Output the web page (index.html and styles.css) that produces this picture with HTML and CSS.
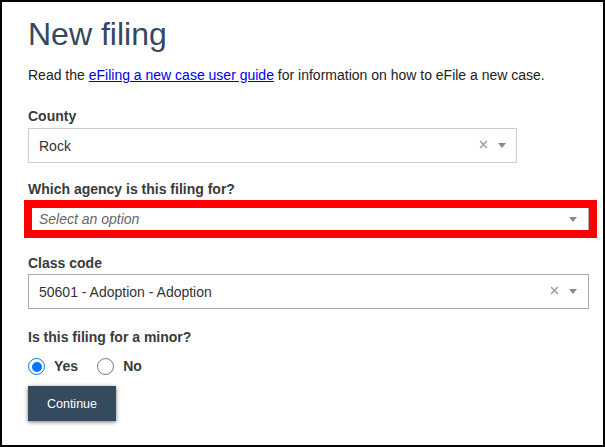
FILE: index.html
```html
<!DOCTYPE html>
<html lang="en">
<head>
<meta charset="utf-8">
<title>New filing</title>
<link rel="stylesheet" href="styles.css">
</head>
<body>
<main class="frame">
  <h1 class="title">New filing</h1>
  <p class="intro">Read the <a href="#" class="link">eFiling a new case user guide</a> for information on how to eFile a new case.</p>

  <div class="field field-first">
    <div class="label">County</div>
    <div class="select select-county">
      <span class="select-text">Rock</span>
      <svg class="clear" width="9" height="9" viewBox="0 0 9 9"><path d="M1 1L8 8M8 1L1 8" stroke="#999" stroke-width="1.4" fill="none"/></svg>
      <span class="arrow"></span>
    </div>
  </div>

  <div class="field">
    <div class="label">Which agency is this filing for?</div>
    <div class="highlight">
      <div class="select-inner">
        <span class="select-text placeholder">Select an option</span>
        <span class="arrow"></span>
      </div>
    </div>
  </div>

  <div class="field field-class">
    <div class="label">Class code</div>
    <div class="select select-class">
      <span class="select-text">50601 - Adoption - Adoption</span>
      <svg class="clear" width="9" height="9" viewBox="0 0 9 9"><path d="M1 1L8 8M8 1L1 8" stroke="#999" stroke-width="1.4" fill="none"/></svg>
      <span class="arrow"></span>
    </div>
  </div>

  <div class="field field-minor">
    <div class="label">Is this filing for a minor?</div>
    <div class="radio-row">
      <label class="radio-opt"><span class="radio checked"><span class="dot"></span></span><span class="radio-label">Yes</span></label>
      <label class="radio-opt"><span class="radio"></span><span class="radio-label">No</span></label>
    </div>
  </div>

  <button class="btn" type="button">Continue</button>
</main>
</body>
</html>
```

FILE: styles.css
```css
html, body {
  margin: 0;
  padding: 0;
  background: #fff;
}

body {
  font-family: "Liberation Sans", Arial, sans-serif;
  color: #333;
}

.frame {
  box-sizing: border-box;
  width: 605px;
  height: 447px;
  border: 2px solid #000;
  padding: 14px 0 0 26px;
  overflow: hidden;
}

.title {
  margin: 0 0 12px;
  font-size: 32px;
  line-height: 37px;
  font-weight: normal;
  color: #34495e;
}

.intro {
  margin: 0 0 21px;
  font-size: 14px;
  line-height: 20px;
  color: #222;
}

.link {
  color: #0000ee;
  text-decoration: underline;
}

.label {
  font-size: 14px;
  line-height: 20px;
  font-weight: bold;
  color: #3a3a3a;
}

.field {
  margin-top: 16px;
}

.field-first {
  margin-top: 0;
}

.field-class {
  margin-top: 15px;
}

.field-minor {
  margin-top: 18px;
}

.select {
  box-sizing: border-box;
  display: flex;
  align-items: center;
  height: 35px;
  margin-top: 2px;
  padding: 0 10px 0 10px;
  border: 1px solid #ccc;
  background: #fff;
}

.select-county {
  width: 489px;
}

.select-class {
  width: 561px;
  margin-top: 1px;
  border-color: #aaa;
  padding-right: 11px;
}

.select-text {
  flex: 1;
  font-size: 14px;
  color: #333;
  white-space: nowrap;
}

.placeholder {
  font-style: italic;
  color: #666;
}

.clear {
  display: block;
  margin-right: 10px;
  margin-top: -2px;
}

.arrow {
  display: block;
  width: 0;
  height: 0;
  border-style: solid;
  border-width: 5px 4.5px 0 4.5px;
  border-color: #888 transparent transparent transparent;
}

.highlight {
  box-sizing: border-box;
  width: 573px;
  margin: 1px 0 0 -4px;
  border: 8px solid #ff0000;
  background: #fff;
}

.select-inner {
  box-sizing: border-box;
  display: flex;
  align-items: center;
  height: 22px;
  padding: 0 11px 0 7px;
  border-right: 1px solid #aaa;
}

.radio-row {
  display: flex;
  align-items: center;
  margin-top: 11px;
  height: 17px;
}

.radio-opt {
  display: flex;
  align-items: center;
  gap: 9px;
  margin-right: 19px;
}

.radio {
  box-sizing: border-box;
  display: flex;
  align-items: center;
  justify-content: center;
  width: 17px;
  height: 17px;
  border: 1px solid #767676;
  border-radius: 50%;
  background: #fff;
}

.radio.checked {
  border: 1.5px solid #0075ff;
}

.dot {
  display: block;
  width: 10px;
  height: 10px;
  border-radius: 50%;
  background: #0075ff;
}

.radio-label {
  font-size: 14px;
  line-height: 17px;
  font-weight: bold;
  color: #3a3a3a;
}

.btn {
  display: block;
  box-sizing: border-box;
  width: 88px;
  height: 35px;
  margin-top: 11px;
  padding: 0;
  border: none;
  background: #334a5f;
  color: #fff;
  font-family: "Liberation Sans", Arial, sans-serif;
  font-size: 12.5px;
  box-shadow: 0 1px 4px rgba(0, 0, 0, 0.55);
}
```
